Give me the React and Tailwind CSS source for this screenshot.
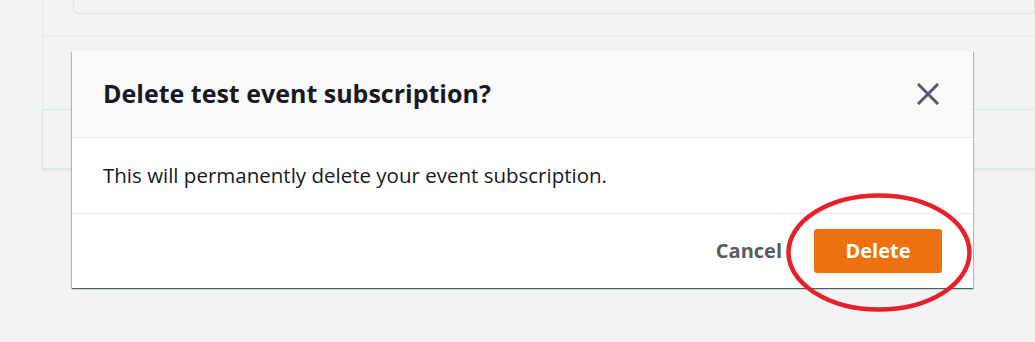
import React from "react";

const CloseIcon = () => (
  <svg width="22" height="22" viewBox="0 0 22 22" fill="none">
    <path d="M2 2L20 20M20 2L2 20" stroke="#545b64" strokeWidth="3" strokeLinecap="square" />
  </svg>
);

const App = () => {
  return (
    <div
      className="relative w-[1035px] h-[342px] overflow-hidden bg-[#f2f3f3]"
      style={{ fontFamily: '"Open Sans", "Noto Sans", sans-serif' }}
    >
      {/* page behind the dialog */}
      <div className="ml-[42px] h-[109px] border-l border-[#e8eaea]">
        <div className="ml-[30px] h-[14px] border border-t-0 border-[#e1e4e4] rounded-bl-md" />
        <div className="mt-[22px] border-t border-[#e8eaea]" />
      </div>
      <div className="ml-[42px] h-[60px] border border-r-0 border-[#d3e7ee] shadow-[0_2px_2px_rgba(0,28,36,0.06)]" />

      {/* dialog */}
      <div className="absolute left-[72px] top-[51px] w-[901px] bg-white shadow-[0_1px_1px_0_rgba(0,28,36,0.5),1px_1px_1px_0_rgba(0,28,36,0.2),-1px_1px_1px_0_rgba(0,28,36,0.2)]">
        <div className="h-[87px] bg-[#fafafa] border-b border-[#eaeded] flex items-center justify-between pl-[31px] pr-[34px]">
          <h2 className="text-[25px] font-bold text-[#16191f]">
            Delete test event subscription?
          </h2>
          <button className="p-0">
            <CloseIcon />
          </button>
        </div>
        <div className="h-[76px] border-b border-[#eaeded] flex items-center px-[31px]">
          <p className="text-[20.5px] text-[#16191f]">
            This will permanently delete your event subscription.
          </p>
        </div>
        <div className="h-[74px] flex items-center justify-end gap-[32px] pr-[31px]">
          <button className="text-[20px] font-bold text-[#545b64]">Cancel</button>
          <button className="w-[128px] h-[44px] rounded-[3px] bg-[#ec7211] text-[20px] font-bold text-white">
            Delete
          </button>
        </div>
      </div>

      {/* annotation */}
      <svg
        className="absolute left-[785px] top-[192px]"
        width="188"
        height="121"
        viewBox="0 0 188 121"
        fill="none"
      >
        <ellipse cx="94" cy="60.5" rx="90.5" ry="57" stroke="#e8202a" strokeWidth="4.5" />
      </svg>
    </div>
  );
};

export default App;
